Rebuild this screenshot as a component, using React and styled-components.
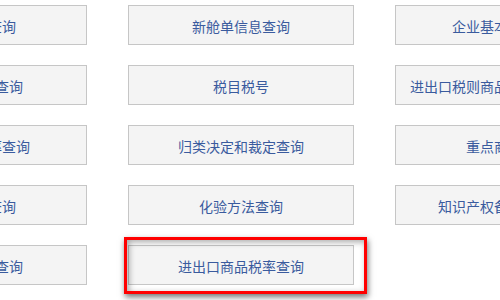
import React from 'react'
import styled, { createGlobalStyle } from 'styled-components'

const GlobalStyle = createGlobalStyle`
  html, body {
    margin: 0;
    padding: 0;
    background: #ffffff;
    overflow: hidden;
  }
  body {
    width: 500px;
    height: 300px;
    font-family: "Noto Sans CJK SC", "Noto Sans", sans-serif;
  }
`

const items = [
  { label: '通关状态查询' },
  { label: '新舱单信息查询' },
  { label: '企业基本信息查询' },
  { label: '报关单信息查询' },
  { label: '税目税号' },
  { label: '进出口税则商品及品目注释查询' },
  { label: '海关公布汇率查询' },
  { label: '归类决定和裁定查询' },
  { label: '重点商品查询' },
  { label: '行政许可查询' },
  { label: '化验方法查询' },
  { label: '知识产权备案信息查询' },
  { label: '原产地证书查询' },
  { label: '进出口商品税率查询', marked: true }
]

export default function App() {
  return (
    <>
      <GlobalStyle />
      <Grid>
        {items.map(item => (
          <Cell key={item.label}>
            <QueryButton>{item.label}</QueryButton>
            {item.marked && <Highlight />}
          </Cell>
        ))}
      </Grid>
    </>
  )
}

const Grid = styled.div`
  display: grid;
  grid-template-columns: repeat(3, 226px);
  grid-auto-rows: 40px;
  column-gap: 41px;
  row-gap: 20px;
  margin: 5px 0 0 -139px;
`

const Cell = styled.div`
  position: relative;
`

const QueryButton = styled.div`
  box-sizing: border-box;
  height: 100%;
  display: flex;
  align-items: center;
  justify-content: center;
  background: #f4f4f4;
  border: 1px solid #c6c6c6;
  color: #3a5b9e;
  font-size: 14px;
  white-space: nowrap;
  padding-top: 2px;
`

const Highlight = styled.div`
  position: absolute;
  left: -4px;
  top: -8px;
  right: -13px;
  bottom: -9px;
  border: 3px solid #ff0000;
  box-shadow: 1px 3px 6px rgba(0, 0, 0, 0.55), inset 2px 2px 6px rgba(0, 0, 0, 0.35);
  pointer-events: none;
`
